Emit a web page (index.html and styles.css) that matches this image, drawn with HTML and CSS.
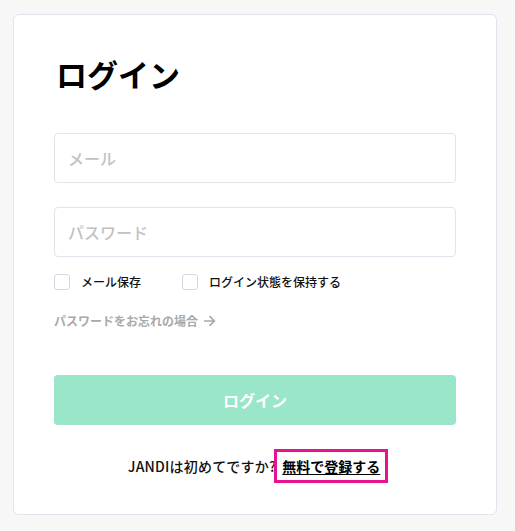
FILE: index.html
```html
<!DOCTYPE html>
<html lang="ja">
<head>
<meta charset="utf-8">
<title>ログイン</title>
<link rel="stylesheet" href="styles.css">
</head>
<body>
<div class="page">
  <div class="card">
    <h1 class="title">ログイン</h1>
    <div class="field"><input class="input" type="text" placeholder="メール"></div>
    <div class="field"><input class="input" type="password" placeholder="パスワード"></div>
    <div class="checks">
      <label class="check"><span class="box"></span><span class="check-label">メール保存</span></label>
      <label class="check"><span class="box"></span><span class="check-label">ログイン状態を保持する</span></label>
    </div>
    <a class="forgot" href="#">パスワードをお忘れの場合
      <svg class="arrow" width="13" height="12" viewBox="0 0 13 12"><path d="M1 6h10.5M6.5 1.2L11.3 6 6.5 10.8" fill="none" stroke="#a9a9a9" stroke-width="1.7"/></svg>
    </a>
    <button class="btn" type="button">ログイン</button>
    <p class="signup"><span class="signup-q">JANDIは初めてですか?</span> <a class="signup-link" href="#">無料で登録する</a></p>
  </div>
</div>
</body>
</html>
```
FILE: styles.css
```css
html, body {
  margin: 0;
  padding: 0;
  background: #f7f7f8;
}
body {
  font-family: "Noto Sans CJK JP", "Noto Sans", sans-serif;
  color: #111;
}
.page {
  padding: 14px 18px 0 13px;
}
.card {
  background: #fff;
  border: 1px solid #e2e3ec;
  border-radius: 6px;
  padding: 39px 40px 38px 40px;
  display: flex;
  flex-direction: column;
}
.title {
  margin: 0;
  font-size: 31px;
  line-height: 40px;
  font-weight: 700;
  color: #000;
  padding-left: 2px;
}
.field {
  margin-top: 39px;
}
.field + .field {
  margin-top: 24px;
}
.input {
  box-sizing: border-box;
  width: 100%;
  height: 50px;
  border: 1px solid #e2e3ec;
  border-radius: 4px;
  padding: 0 13px;
  font-family: inherit;
  font-size: 16px;
  font-weight: 500;
  outline: none;
}
.input::placeholder {
  color: #c2c2c2;
}
.checks {
  display: flex;
  gap: 41px;
  margin-top: 17px;
}
.check {
  display: flex;
  align-items: center;
  gap: 11px;
  font-size: 12px;
  line-height: 16px;
  font-weight: 500;
  color: #111;
}
.box {
  box-sizing: border-box;
  width: 16px;
  height: 16px;
  border: 1px solid #d5d7e0;
  border-radius: 3px;
  background: #fff;
}
.forgot {
  margin-top: 23px;
  display: flex;
  align-items: center;
  gap: 5px;
  font-size: 12px;
  line-height: 16px;
  font-weight: 700;
  color: #a9a9a9;
  text-decoration: none;
}
.btn {
  margin-top: 46px;
  height: 50px;
  border: none;
  border-radius: 4px;
  background: #9ae6c8;
  color: #fff;
  font-family: inherit;
  font-size: 16px;
  font-weight: 700;
}
.signup {
  margin: 31px 0 0;
  text-align: center;
  font-size: 14px;
  line-height: 20px;
  font-weight: 500;
  color: #111;
}
.signup-q {
  letter-spacing: 0.2px;
}
.signup-link {
  color: #000;
  font-weight: 700;
  font-size: 14px;
  padding: 1px 2px;
  margin-left: 1px;
  text-decoration: underline;
  text-underline-offset: 2px;
  outline: 3px solid #e8138f;
  outline-offset: 3px;
}
```
